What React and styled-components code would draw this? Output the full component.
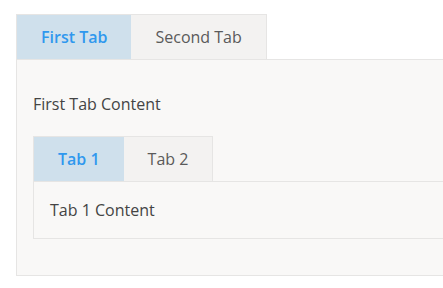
import React, { useState } from "react";
import styled, { createGlobalStyle } from "styled-components";

const GlobalStyle = createGlobalStyle`
  html, body {
    margin: 0;
    background: #ffffff;
    overflow: hidden;
  }
  body {
    font-family: "Open Sans", "Liberation Sans", sans-serif;
    color: #444444;
  }
`;

const Page = styled.div`
  padding: 14px 0 0 16px;
  width: 520px;
`;

const TabList = styled.div`
  display: inline-flex;
  border: 1px solid #e6e5e4;
  border-bottom: none;
  vertical-align: top;
`;

const Tab = styled.button`
  border: none;
  margin: 0;
  padding: 10px 24px;
  font-family: inherit;
  font-size: 16px;
  line-height: 24px;
  cursor: pointer;
  background: ${(p) => (p.$active ? "#cfe0ec" : "#f3f2f1")};
  color: ${(p) => (p.$active ? "#2f98ee" : "#5a5a5a")};
  font-weight: ${(p) => (p.$active ? 600 : 400)};
`;

const Panel = styled.div`
  background: #f9f8f7;
  border: 1px solid #e6e5e4;
  padding: ${(p) => p.$pad};
  font-size: 16px;
  line-height: 24px;
  color: #444444;
`;

const Text = styled.p`
  margin: 0;
`;

const Nested = styled.div`
  margin-top: 20px;
`;

function Tabs({ tabs, panelPad, children }) {
  const [active, setActive] = useState(0);
  return (
    <div>
      <TabList>
        {tabs.map((t, i) => (
          <Tab key={t} $active={i === active} onClick={() => setActive(i)}>
            {t}
          </Tab>
        ))}
      </TabList>
      <Panel $pad={panelPad}>{children(active)}</Panel>
    </div>
  );
}

export default function App() {
  return (
    <>
      <GlobalStyle />
      <Page>
        <Tabs tabs={["First Tab", "Second Tab"]} panelPad="32px 16px 36px">
          {(a) =>
            a === 0 ? (
              <>
                <Text>First Tab Content</Text>
                <Nested>
                  <Tabs tabs={["Tab 1", "Tab 2"]} panelPad="16px">
                    {(b) => <Text>{b === 0 ? "Tab 1 Content" : "Tab 2 Content"}</Text>}
                  </Tabs>
                </Nested>
              </>
            ) : (
              <Text>Second Tab Content</Text>
            )
          }
        </Tabs>
      </Page>
    </>
  );
}
